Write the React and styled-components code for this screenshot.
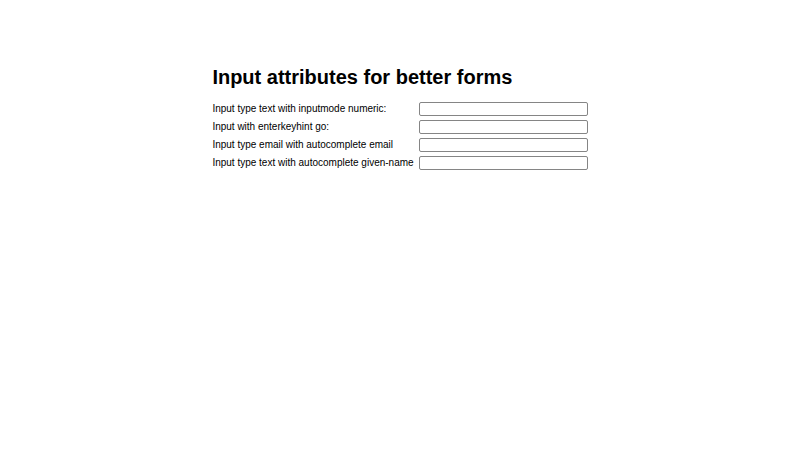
import React from 'react';
import styled, { createGlobalStyle } from 'styled-components';

// --- Global styles ---

const GlobalStyle = createGlobalStyle`
  body {
    margin: 0;
    background-color: #fff;
    color: #000;
    font-family: 'Liberation Sans', Arial, sans-serif;
  }
`;

// --- Styled components ---

const PageWrapper = styled.main`
  display: flex;
  justify-content: center;
  padding: 64px 16px;
`;

const Content = styled.div`
  display: flex;
  flex-direction: column;
  gap: 12px;
`;

const Title = styled.h1`
  margin: 0;
  font-size: 20px;
  line-height: 26px;
  font-weight: 700;
`;

const Form = styled.form`
  display: grid;
  grid-template-columns: auto auto;
  column-gap: 5px;
  row-gap: 4px;
`;

const Label = styled.label`
  font-size: 10px;
  line-height: 13px;
`;

const Input = styled.input`
  box-sizing: border-box;
  width: 169px;
  height: 14px;
  margin: 0;
  padding: 0 2px;
  border: 1px solid #858585;
  border-radius: 2px;
  background-color: #fff;
  font-family: inherit;
  font-size: 10px;
`;

// --- Form fields ---

const fields = [
  { id: 'numeric', label: 'Input type text with inputmode numeric:', type: 'text', inputMode: 'numeric' },
  { id: 'go', label: 'Input with enterkeyhint go:', type: 'text', enterKeyHint: 'go' },
  { id: 'email', label: 'Input type email with autocomplete email', type: 'email', autoComplete: 'email' },
  { id: 'name', label: 'Input type text with autocomplete given-name', type: 'text', autoComplete: 'given-name' },
];

// --- Main component ---

const App = () => {
  return (
    <>
      <GlobalStyle />
      <PageWrapper>
        <Content>
          <Title>Input attributes for better forms</Title>
          <Form>
            {fields.map(({ id, label, ...inputProps }) => (
              <React.Fragment key={id}>
                <Label htmlFor={id}>{label}</Label>
                <Input id={id} name={id} {...inputProps} />
              </React.Fragment>
            ))}
          </Form>
        </Content>
      </PageWrapper>
    </>
  );
};

export default App;
